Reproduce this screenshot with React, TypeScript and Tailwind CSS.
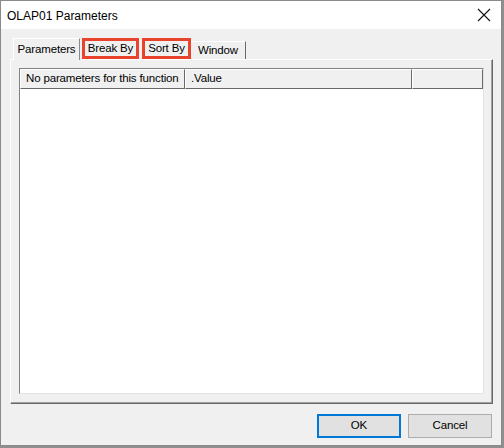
import React from "react";

const font = { fontFamily: '"Liberation Sans", Arial, sans-serif' };

function CloseIcon() {
  return (
    <svg width="14" height="14" viewBox="0 0 14 14" className="block">
      <path d="M1 1 L13 13 M13 1 L1 13" stroke="#111" strokeWidth="1.1" fill="none" />
    </svg>
  );
}

const columns = [
  { label: "No parameters for this function", width: "w-[165px]" },
  { label: ".Value", width: "w-[227px]" },
  { label: "", width: "flex-1" },
];

export default function App() {
  return (
    <div className="w-[504px] h-[448px] bg-[#8f8f8f] overflow-hidden text-[11.5px] tracking-[-0.15px] text-black" style={font}>
      <div className="w-[502px] h-[446px] border border-[#8a8a8a] bg-[#f0f0f0] flex flex-col">
        {/* Title bar */}
        <div className="h-[28px] bg-white flex items-center justify-between pl-[6px] pr-[10px] shrink-0">
          <span className="text-[12px] tracking-normal pt-[1px]">OLAP01 Parameters</span>
          <CloseIcon />
        </div>

        {/* Body */}
        <div className="flex-1 flex flex-col px-[9px] pt-[9px]">
          {/* Tab strip */}
          <div className="flex items-end h-[21px] pl-[3px] relative z-10">
            <div className="w-[67px] h-[22px] -mb-[1px] bg-[#f0f0f0] border-l border-t border-white border-r border-r-[#8a8a8a] flex items-start justify-center pt-[2px]">
              Parameters
            </div>
            <div className="ml-[2px] w-[57px] h-[21px] border-[3px] border-[#e8432d] flex items-center justify-center pt-[1px]">
              Break By
            </div>
            <div className="ml-[3px] w-[49px] h-[21px] border-[3px] border-[#e8432d] flex items-center justify-center pt-[1px]">
              Sort By
            </div>
            <div className="w-[55px] h-[18px] border-t border-white border-r border-r-[#696969] flex items-center justify-center pt-[1px]">
              Window
            </div>
          </div>

          {/* Tab pane */}
          <div className="w-[483px] h-[345px] border-t border-l border-white border-r border-b border-r-[#696969] border-b-[#696969] shadow-[inset_-1px_-1px_0_#a0a0a0] pl-[8px] pt-[8px]">
            {/* List view */}
            <div className="w-[465px] h-[326px] bg-white border border-t-[#828282] border-l-[#828282] border-r-[#e3e3e3] border-b-[#e3e3e3] flex flex-col">
              <div className="flex h-[20px] shrink-0">
                {columns.map((c, i) => (
                  <div
                    key={i}
                    className={`${c.width} h-[20px] bg-[#f0f0f0] border-t border-l border-white border-r border-b border-r-[#696969] border-b-[#696969] flex items-center pl-[5px] whitespace-nowrap overflow-hidden`}
                  >
                    {c.label}
                  </div>
                ))}
              </div>
            </div>
          </div>

          {/* Buttons */}
          <div className="flex justify-end gap-[7px] mt-[10px]">
            <button className="w-[84px] h-[24px] bg-[#e1e1e1] border-2 border-[#0078d7] flex items-center justify-center">
              OK
            </button>
            <button className="w-[84px] h-[24px] bg-[#e1e1e1] border border-[#adadad] flex items-center justify-center">
              Cancel
            </button>
          </div>
        </div>
      </div>
    </div>
  );
}
